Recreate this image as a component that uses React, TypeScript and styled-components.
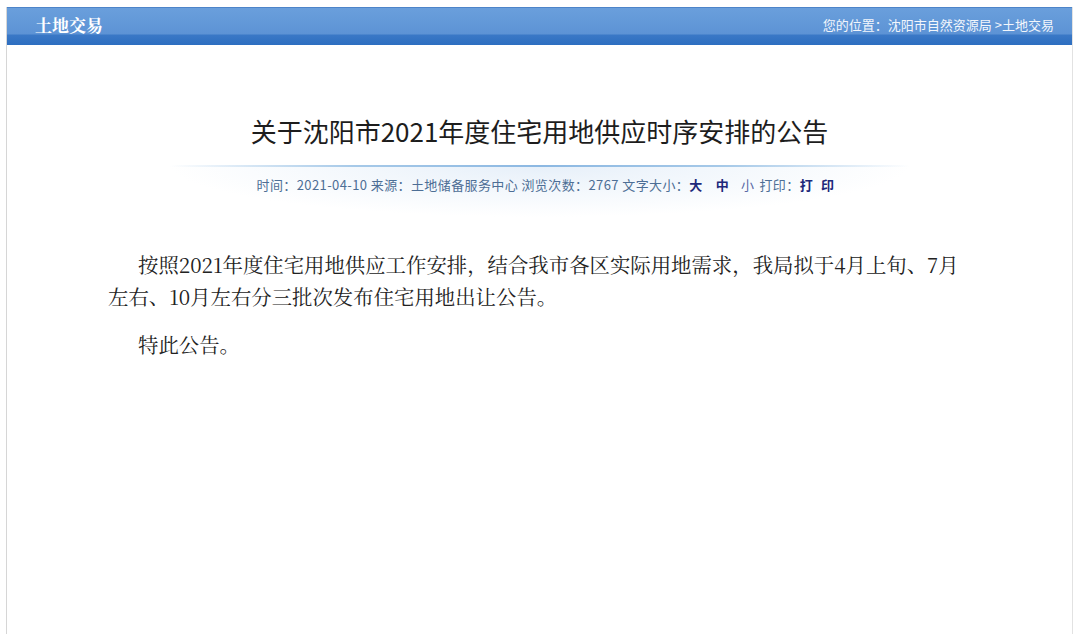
import React from 'react';
import styled, { createGlobalStyle } from 'styled-components';

const GlobalStyle = createGlobalStyle`
  html, body {
    margin: 0;
    padding: 0;
    background: #fff;
    font-family: 'Noto Sans CJK SC', 'Noto Sans', sans-serif;
  }
`;

const Page = styled.div`
  padding: 7px 7px 0 6px;
  height: 634px;
  box-sizing: border-box;
`;

const Panel = styled.div`
  height: 100%;
  border-left: 1px solid #d6d6d6;
  border-right: 1px solid #e2e2e2;
  display: flex;
  flex-direction: column;
`;

const Header = styled.div`
  height: 38px;
  box-sizing: border-box;
  border-top: 1px solid #4d84c9;
  background: linear-gradient(
    to bottom,
    #6a9fdc 0px,
    #5d93d5 26px,
    #3a78c6 27px,
    #2d6ec0 37px
  );
  display: flex;
  align-items: center;
  justify-content: space-between;
  padding: 0 18px 4px 28px;
  color: #fff;
`;

const HeaderTitle = styled.div`
  font-family: 'Noto Serif CJK SC', 'Noto Sans CJK SC', serif;
  font-weight: 700;
  font-size: 17px;
`;

const Crumb = styled.div`
  font-size: 13px;
  color: #f2f6fc;
  white-space: pre;
`;

const Title = styled.h1`
  margin: 66px 0 0;
  font-size: 26px;
  font-weight: 400;
  line-height: 40px;
  text-align: center;
  color: #1d1d1d;
`;

const MetaBand = styled.div`
  position: relative;
  width: 740px;
  margin: 14px auto 0;
  height: 52px;
  display: flex;
  justify-content: center;
  align-items: flex-start;
  padding: 10px 0 0 12px;
  box-sizing: border-box;
  background: radial-gradient(ellipse 50% 100% at 50% 0%, #e6eff9 0%, #f2f7fc 45%, rgba(255, 255, 255, 0) 100%);
  &::before {
    content: '';
    position: absolute;
    left: 0;
    right: 0;
    top: 0;
    height: 2px;
    background: linear-gradient(to right, rgba(255, 255, 255, 0), #a6c9e8 25%, #8cb8e2 50%, #a6c9e8 75%, rgba(255, 255, 255, 0));
  }
`;

const Meta = styled.div`
  font-size: 13px;
  line-height: 20px;
  color: #4d6e95;
  white-space: pre;
  letter-spacing: 0.4px;
`;

const SizeLink = styled.span<{ $light?: boolean; $gap?: number }>`
  color: ${(p) => (p.$light ? '#5a6aa6' : '#20287a')};
  font-weight: ${(p) => (p.$light ? 400 : 600)};
  margin-right: ${(p) => p.$gap ?? 0}px;
`;

const Body = styled.div`
  margin-top: 32px;
  padding: 0 60px 0 101px;
  font-family: 'Noto Serif CJK SC', 'Noto Sans CJK SC', serif;
  color: #222;
`;

const Para = styled.p`
  margin: 0 0 16px;
  font-size: 20.4px;
  line-height: 32px;
  text-indent: 30px;
  white-space: nowrap;
`;

export default function App() {
  return (
    <>
      <GlobalStyle />
      <Page>
        <Panel>
          <Header>
            <HeaderTitle>土地交易</HeaderTitle>
            <Crumb>{'您的位置：沈阳市自然资源局 >土地交易'}</Crumb>
          </Header>
          <Title>关于沈阳市2021年度住宅用地供应时序安排的公告</Title>
          <MetaBand>
            <Meta>
              {'时间：2021-04-10 来源：土地储备服务中心 浏览次数：2767 文字大小：'}
              <SizeLink $gap={13}>大</SizeLink>
              <SizeLink $gap={12}>中</SizeLink>
              <SizeLink $light $gap={5}>小</SizeLink>
              {'打印：'}
              <SizeLink $gap={8}>打</SizeLink>
              <SizeLink>印</SizeLink>
            </Meta>
          </MetaBand>
          <Body>
            <Para>
              按照2021年度住宅用地供应工作安排，结合我市各区实际用地需求，我局拟于4月上旬、7月
              <br />
              左右、10月左右分三批次发布住宅用地出让公告。
            </Para>
            <Para>特此公告。</Para>
          </Body>
        </Panel>
      </Page>
    </>
  );
}
